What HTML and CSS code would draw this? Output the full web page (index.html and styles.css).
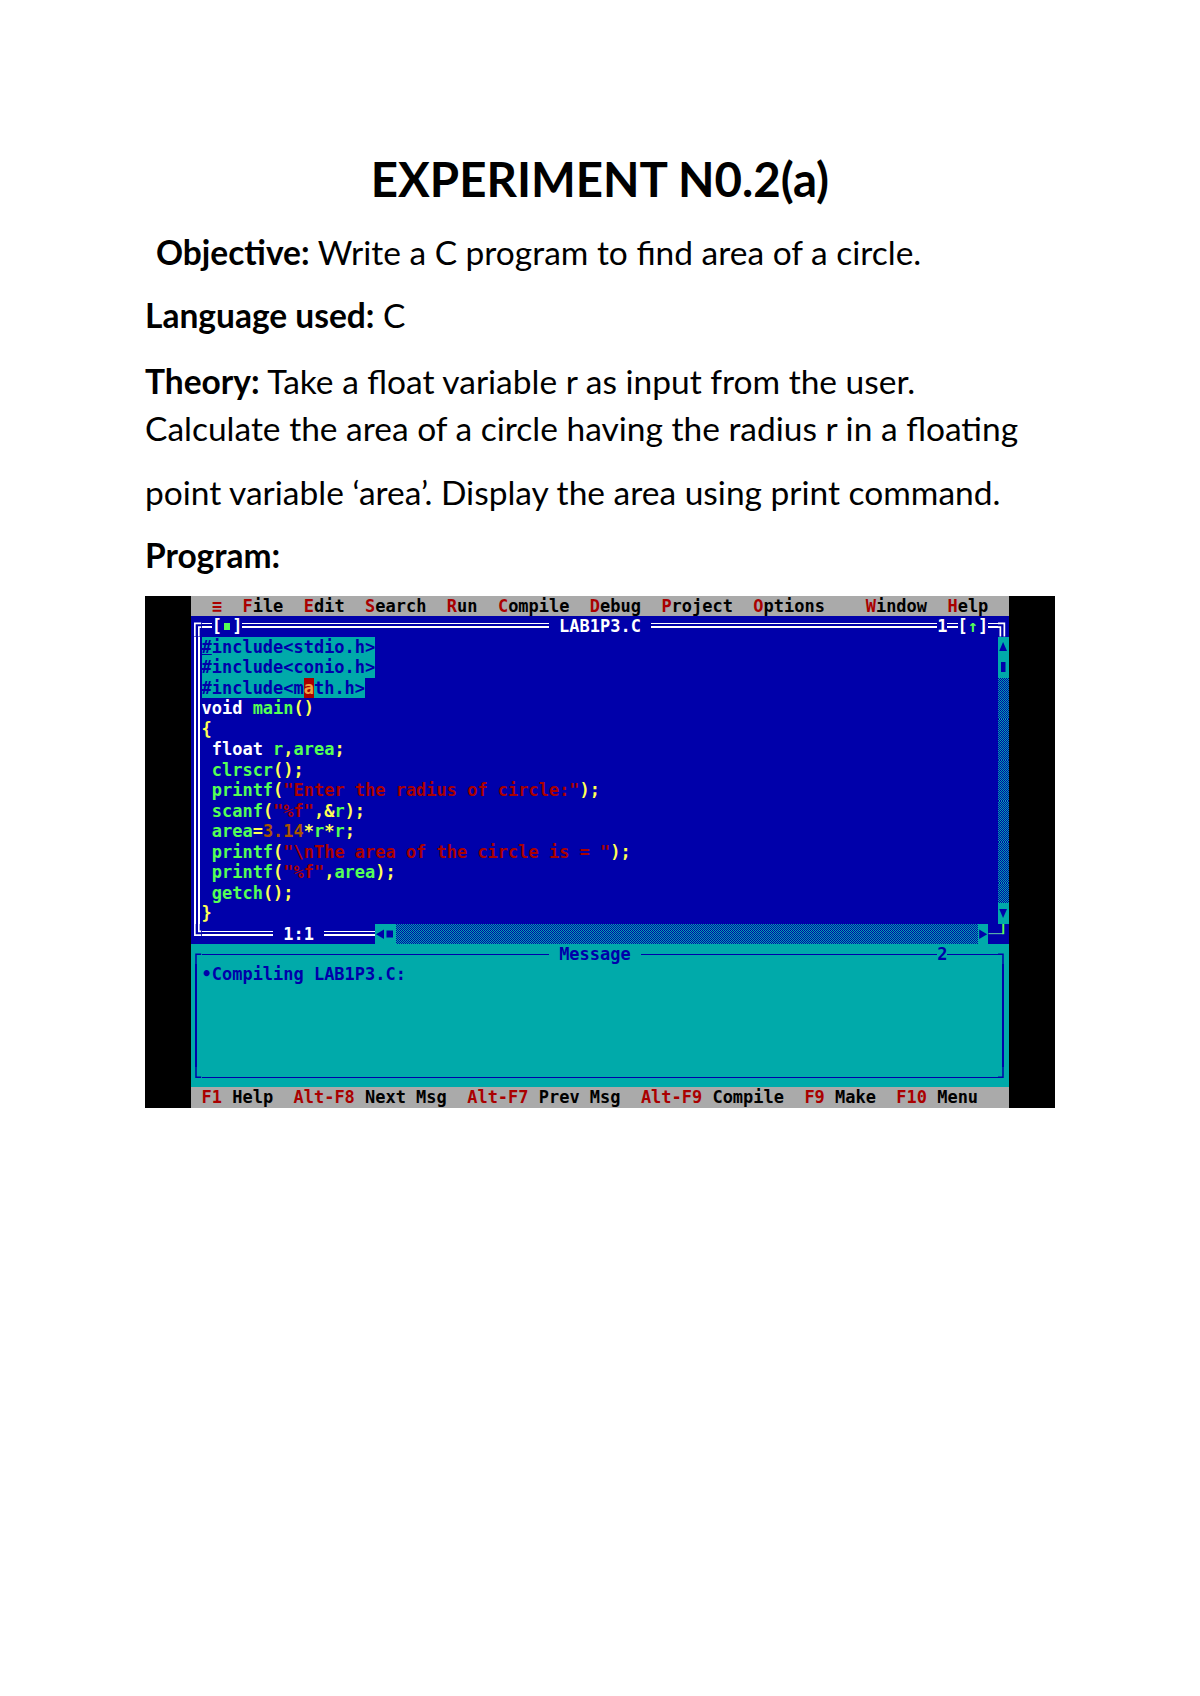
FILE: index.html
```html
<!DOCTYPE html>
<html>
<head>
<meta charset="utf-8">
<title>Experiment No.2(a)</title>
<link rel="stylesheet" href="styles.css">
</head>
<body>
<main class="page">
<h1 class="title">EXPERIMENT N0.2(a)</h1>
<p class="line obj"><b>Objective:</b> Write a C program to find area of a circle.</p>
<p class="line lang"><b>Language used:</b> C</p>
<p class="line theory"><b>Theory:</b> Take a float variable r as input from the user.<br>Calculate the area of a circle having the radius r in a floating</p>
<p class="line point">point variable ‘area’. Display the area using print command.</p>
<p class="line prog"><b>Program:</b></p>

<div class="shot">
<div class="dos">
<div class="r menu"><span>  <span class="hk">≡</span>  <span class="hk">F</span>ile  <span class="hk">E</span>dit  <span class="hk">S</span>earch  <span class="hk">R</span>un  <span class="hk">C</span>ompile  <span class="hk">D</span>ebug  <span class="hk">P</span>roject  <span class="hk">O</span>ptions    <span class="hk">W</span>indow  <span class="hk">H</span>elp  </span></div>

<div class="r ed">
<span class="cell"><svg viewBox="0 0 10.22 20.48" preserveAspectRatio="none"><path class="dbl" d="M3.85 20.48V7.4H10.22M7.85 20.48V11.2H10.22"/></svg></span>
<span class="dl"> </span>
<span>[</span>
<span class="cell"><svg viewBox="0 0 10.22 20.48" preserveAspectRatio="none"><rect x="2" y="7" width="6" height="7" fill="#55FF55"/></svg></span>
<span>]</span>
<span class="dl">                              </span>
<span> LAB1P3.C </span>
<span class="dl">                            </span>
<span>1</span>
<span class="dl"> </span>
<span>[<span class="g">↑</span>]</span>
<span class="dl"> </span>
<span class="cell"><svg viewBox="0 0 10.22 20.48" preserveAspectRatio="none"><path class="dbl" d="M0 7.4H6.37V20.48M0 11.2H2.37V20.48"/></svg></span>
</div>

<div class="r ed"><span class="vl"> </span><span class="code"><span class="sel"><u>#</u>include&lt;stdio.h&gt;</span></span><span class="cell sbtn"><svg viewBox="0 0 10.22 20.48" preserveAspectRatio="none"><path d="M5.1 5L9 14H1.2Z" fill="#0000AA"/></svg></span></div>
<div class="r ed"><span class="vl"> </span><span class="code"><span class="sel">#include&lt;conio.h&gt;</span></span><span class="cell sbtn"><svg viewBox="0 0 10.22 20.48" preserveAspectRatio="none"><rect x="3" y="5" width="4.5" height="10" fill="#0000AA"/></svg></span></div>
<div class="r ed"><span class="vl"> </span><span class="code"><span class="sel">#include&lt;m</span><span class="cur">a</span><span class="sel">th.h&gt;</span></span><span class="cell shade"> </span></div>
<div class="r ed"><span class="vl"> </span><span class="code"><span class="w">void</span> <span class="g">main</span><span class="y">()</span></span><span class="cell shade"> </span></div>
<div class="r ed"><span class="vl"> </span><span class="code"><span class="y">{</span></span><span class="cell shade"> </span></div>
<div class="r ed"><span class="vl"> </span><span class="code"> <span class="w">float</span> <span class="g">r</span><span class="y">,</span><span class="g">area</span><span class="y">;</span></span><span class="cell shade"> </span></div>
<div class="r ed"><span class="vl"> </span><span class="code"> <span class="g">clrscr</span><span class="y">();</span></span><span class="cell shade"> </span></div>
<div class="r ed"><span class="vl"> </span><span class="code"> <span class="g">printf</span><span class="y">(</span><span class="rd">"Enter the radius of circle:"</span><span class="y">);</span></span><span class="cell shade"> </span></div>
<div class="r ed"><span class="vl"> </span><span class="code"> <span class="g">scanf</span><span class="y">(</span><span class="rd">"%f"</span><span class="y">,&amp;</span><span class="g">r</span><span class="y">);</span></span><span class="cell shade"> </span></div>
<div class="r ed"><span class="vl"> </span><span class="code"> <span class="g">area</span><span class="y">=</span><span class="br">3.14</span><span class="y">*</span><span class="g">r</span><span class="y">*</span><span class="g">r</span><span class="y">;</span></span><span class="cell shade"> </span></div>
<div class="r ed"><span class="vl"> </span><span class="code"> <span class="g">printf</span><span class="y">(</span><span class="rd">"\nThe area of the circle is = "</span><span class="y">);</span></span><span class="cell shade"> </span></div>
<div class="r ed"><span class="vl"> </span><span class="code"> <span class="g">printf</span><span class="y">(</span><span class="rd">"%f"</span><span class="y">,</span><span class="g">area</span><span class="y">);</span></span><span class="cell shade"> </span></div>
<div class="r ed"><span class="vl"> </span><span class="code"> <span class="g">getch</span><span class="y">();</span></span><span class="cell shade"> </span></div>
<div class="r ed"><span class="vl"> </span><span class="code"><span class="y">}</span></span><span class="cell sbtn"><svg viewBox="0 0 10.22 20.48" preserveAspectRatio="none"><path d="M1.2 6H9L5.1 15Z" fill="#0000AA"/></svg></span></div>

<div class="r ed">
<span class="cell"><svg viewBox="0 0 10.22 20.48" preserveAspectRatio="none"><path class="dbl" d="M3.85 0V11.2H10.22M7.85 0V7.4H10.22"/></svg></span>
<span class="dl">       </span>
<span> 1:1 </span>
<span class="dl">     </span>
<span class="cell sbtn"><svg viewBox="0 0 10.22 20.48" preserveAspectRatio="none"><path d="M1 10.3L9 5.5V15.1Z" fill="#0000AA"/></svg></span>
<span class="cell sbtn"><svg viewBox="0 0 10.22 20.48" preserveAspectRatio="none"><rect x="1.5" y="6.5" width="6.5" height="7" fill="#0000AA"/></svg></span>
<span class="shade">                                                         </span>
<span class="cell sbtn"><svg viewBox="0 0 10.22 20.48" preserveAspectRatio="none"><path d="M9.2 10.3L1.2 5.5V15.1Z" fill="#0000AA"/></svg></span>
<span class="cell2"><svg viewBox="0 0 20.45 20.48" preserveAspectRatio="none"><path d="M0.5 9.6H15.3" stroke="#55AAAA" stroke-width="1.2" fill="none"/><path d="M15.3 0V10.2" stroke="#55FF55" stroke-width="2" fill="none"/></svg></span>
</div>

<div class="r msg">
<span class="cell"><svg viewBox="0 0 10.22 20.48" preserveAspectRatio="none"><path class="sgl" d="M5 20.48V10.3H10.22"/></svg></span>
<span class="sl">                                  </span>
<span> Message </span>
<span class="sl">                             </span>
<span>2</span>
<span class="sl">     </span>
<span class="cell"><svg viewBox="0 0 10.22 20.48" preserveAspectRatio="none"><path class="sgl" d="M0 10.3H5V20.48"/></svg></span>
</div>
<div class="r msg"><span class="svl"> </span><span class="code">•Compiling LAB1P3.C:</span><span class="svl"> </span></div>
<div class="r msg"><span class="svl"> </span><span class="code"> </span><span class="svl"> </span></div>
<div class="r msg"><span class="svl"> </span><span class="code"> </span><span class="svl"> </span></div>
<div class="r msg"><span class="svl"> </span><span class="code"> </span><span class="svl"> </span></div>
<div class="r msg"><span class="svl"> </span><span class="code"> </span><span class="svl"> </span></div>
<div class="r msg">
<span class="cell"><svg viewBox="0 0 10.22 20.48" preserveAspectRatio="none"><path class="sgl" d="M5 0V10.3H10.22"/></svg></span>
<span class="sl">                                                                              </span>
<span class="cell"><svg viewBox="0 0 10.22 20.48" preserveAspectRatio="none"><path class="sgl" d="M0 10.3H5V0"/></svg></span>
</div>

<div class="r status"><span> <span class="hk">F1</span> Help  <span class="hk">Alt-F8</span> Next Msg  <span class="hk">Alt-F7</span> Prev Msg  <span class="hk">Alt-F9</span> Compile  <span class="hk">F9</span> Make  <span class="hk">F10</span> Menu   </span></div>
</div>
</div>
</main>
</body>
</html>
```

FILE: styles.css
```css
body {
  margin: 0;
  background: #ffffff;
}

.page {
  width: 1200px;
  padding-top: 151px;
  font-family: Lato, "Open Sans", sans-serif;
  color: #000000;
}

.title {
  margin: 0 0 22px;
  text-align: center;
  font-size: 47.4px;
  line-height: 56px;
  font-weight: 700;
}

.line {
  margin: 0;
  padding-left: 145px;
  font-size: 33.5px;
  line-height: 47px;
  white-space: nowrap;
}

.line b {
  font-weight: 700;
}

.obj {
  margin-bottom: 16px;
  text-indent: 11px;
}

.lang {
  margin-bottom: 19px;
}

.theory {
  margin-bottom: 17px;
}

.point {
  margin-bottom: 16px;
}

.prog {
  margin-bottom: 17px;
}

/* ---------- DOS screenshot ---------- */

.shot {
  margin-left: 145px;
  width: 910px;
  background: #000000;
  display: flex;
  justify-content: center;
}

.dos {
  width: 80ch;
  font-family: "DejaVu Sans Mono", "Liberation Mono", monospace;
  font-weight: 700;
  font-size: 16.98px;
  line-height: 20.48px;
}

.r {
  display: flex;
  height: 20.48px;
  overflow: hidden;
}

.r > span {
  flex: none;
  white-space: pre;
  height: 20.48px;
}

.menu,
.status {
  background: #aaaaaa;
  color: #000000;
}

.hk {
  color: #aa0000;
}

.ed {
  background: #0000aa;
  color: #ffffff;
}

.msg {
  background: #00aaaa;
  color: #0000aa;
}

.cell {
  width: 1ch;
}

.cell2 {
  width: 2ch;
}

.cell svg,
.cell2 svg {
  display: block;
  width: 100%;
  height: 100%;
}

.dbl {
  fill: none;
  stroke: #ffffff;
  stroke-width: 1.7;
  stroke-linejoin: miter;
}

.sgl {
  fill: none;
  stroke: #0000aa;
  stroke-width: 1.5;
  stroke-linejoin: miter;
}

.dl {
  background: linear-gradient(to bottom,
    transparent 6.55px, #ffffff 6.55px, #ffffff 8.25px,
    transparent 8.25px, transparent 10.35px,
    #ffffff 10.35px, #ffffff 12.05px, transparent 12.05px);
}

.vl {
  width: 1ch;
  background: linear-gradient(to right,
    transparent 3px, #ffffff 3px, #ffffff 4.7px,
    transparent 4.7px, transparent 7px,
    #ffffff 7px, #ffffff 8.7px, transparent 8.7px);
}

.sl {
  background: linear-gradient(to bottom,
    transparent 9.55px, #0000aa 9.55px, #0000aa 11.05px, transparent 11.05px);
}

.svl {
  width: 1ch;
  background: linear-gradient(to right,
    transparent 4.25px, #0000aa 4.25px, #0000aa 5.75px, transparent 5.75px);
}

.code {
  width: 78ch;
  overflow: hidden;
}

.sel,
.cur {
  display: inline-block;
  height: 20.48px;
  vertical-align: top;
}

.sel {
  background: #00aaaa;
  color: #0000aa;
}

.cur {
  background: #aa0000;
  color: #f0a040;
}

.sbtn {
  background: #00aaaa;
}

.shade {
  background-color: #0000aa;
  background-image: repeating-conic-gradient(#00aaaa 0 25%, #0000aa 0 50%);
  background-size: 2px 2px;
}

.w { color: #ffffff; }
.g { color: #55ff55; }
.y { color: #ffff55; }
.rd { color: #aa0000; }
.br { color: #aa5500; }
```
